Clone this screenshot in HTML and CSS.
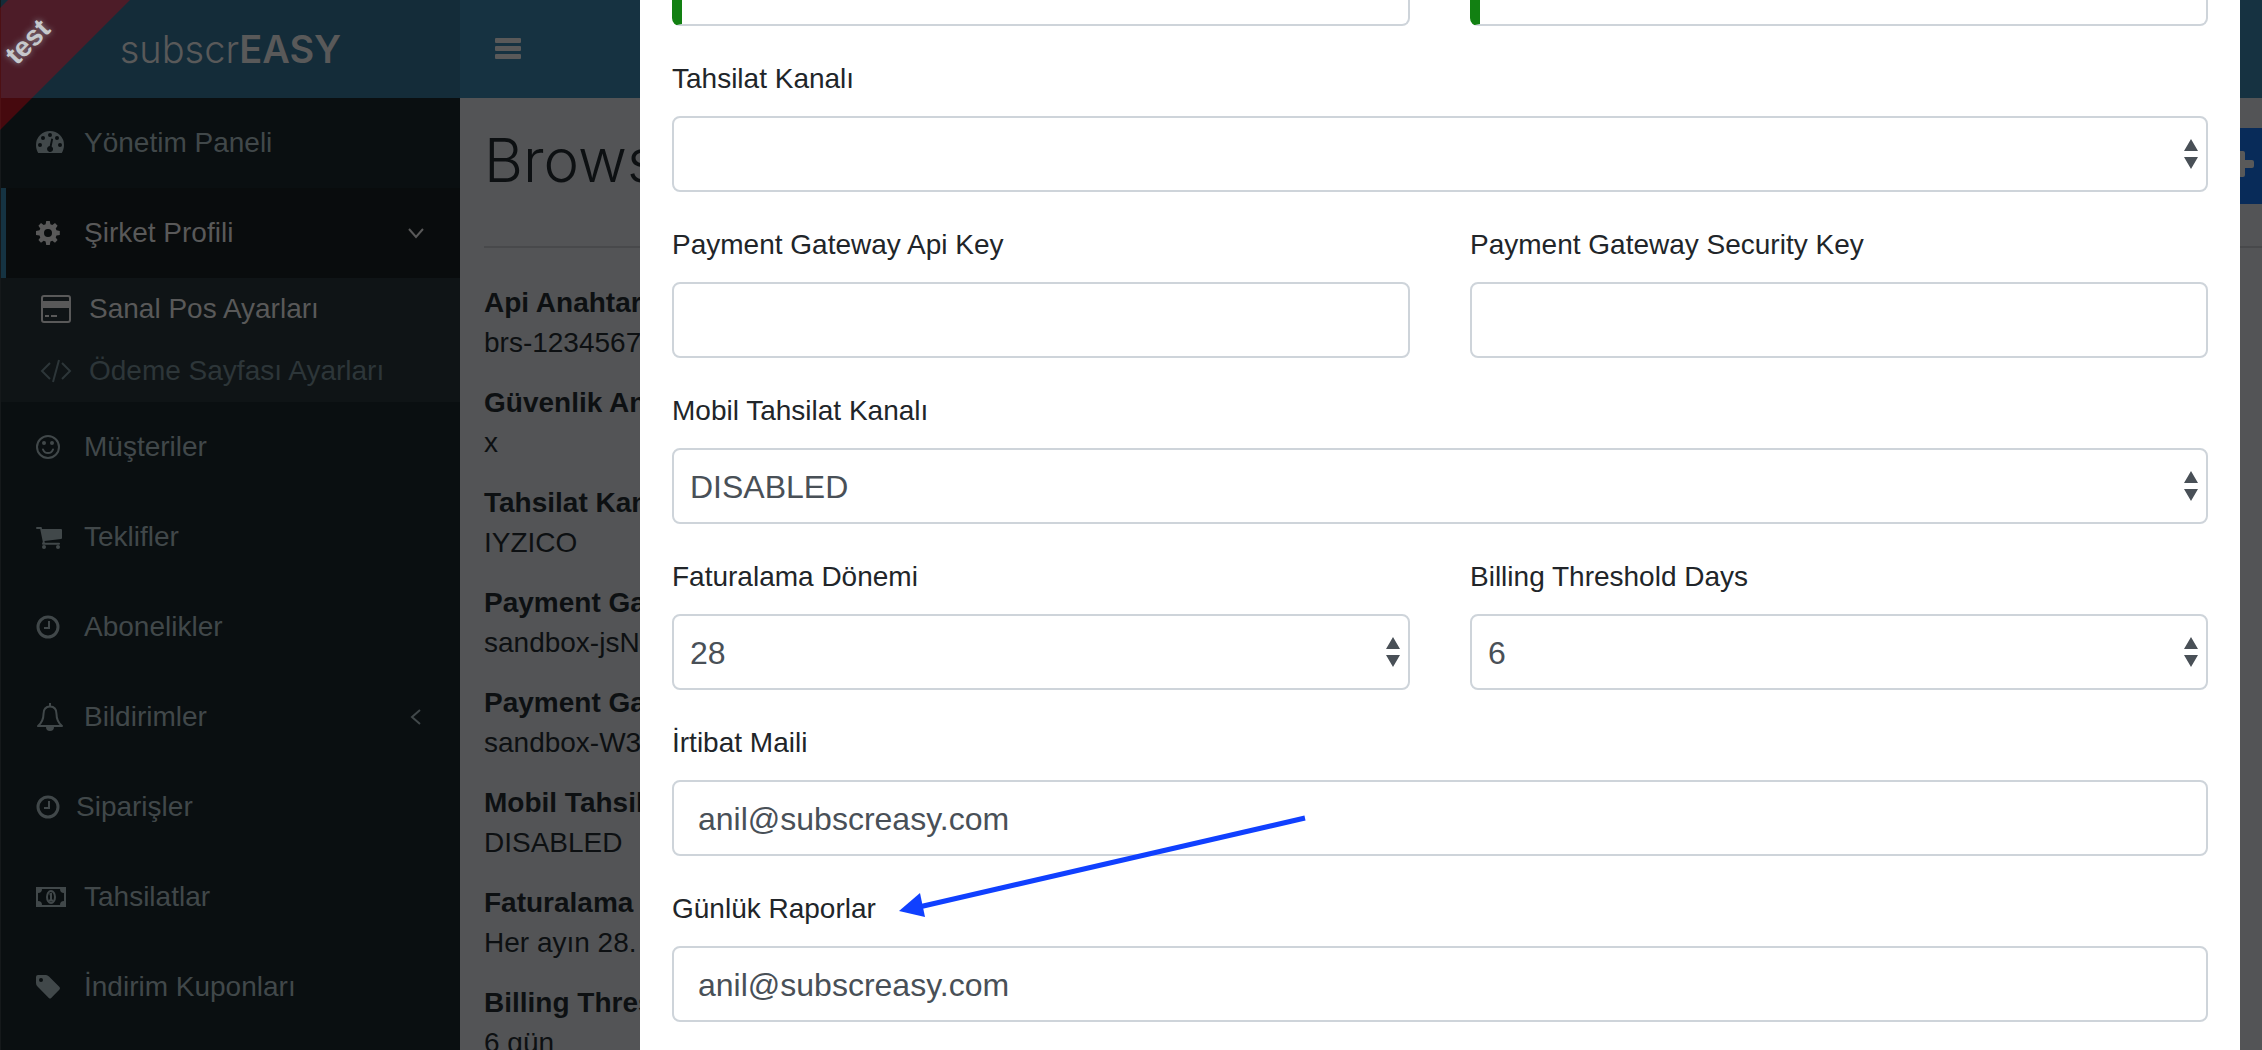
FILE: index.html
```
<!DOCTYPE html>
<html lang="tr">
<head>
    <meta charset="UTF-8">
    <meta name="viewport" content="width=device-width, initial-scale=1.0">
    <title>subscrEASY</title>
    <link rel="stylesheet" href="styles.css">
</head>
<body>
<div class="wrapper">
    <aside class="sidebar">
        <a class="logo" href="#"><span>subscr<b>EASY</b></span></a>
        <ul class="menu">
            <li>
                <a class="menu-link" href="#">
                    <svg class="icon" viewBox="0 0 28 28"><path fill="currentColor" fill-rule="evenodd" d="M0 16a14 14 0 0 1 28 0c0 3-.8 5.600-2.200 8H2.200C.8 21.600 0 19 0 16zM4 14a2 2 0 1 0 0 4a2 2 0 0 0 0-4zM7 7a2 2 0 1 0 0 4a2 2 0 0 0 0-4zM14 4a2 2 0 1 0 0 4a2 2 0 0 0 0-4zM21 7a2 2 0 1 0 0 4a2 2 0 0 0 0-4zM24 14a2 2 0 1 0 0 4a2 2 0 0 0 0-4zM15.300 9.500L13.700 17a3 3 0 1 0 1.900.4l1.500-7.500z"/></svg>
                    Yönetim Paneli
                </a>
            </li>
            <li class="active">
                <a class="menu-link" href="#">
                    <svg class="icon" viewBox="0 0 28 28"><path fill="currentColor" fill-rule="evenodd" d="M10.200 2h3.600l.6 3.200 1.900.8 2.700-1.900 2.600 2.600-1.900 2.700.8 1.900 3.300.6v4l-3.300.6-.8 1.900 1.900 2.700-2.600 2.600-2.700-1.900-1.900.8-.6 3.300h-3.600l-.6-3.300-1.900-.8L5 23.700l-2.600-2.600 1.900-2.700-.8-1.900L0 15.900v-4l3.500-.6.8-1.900-1.900-2.700L5 4.100 7.700 6l1.900-.8zM12 10a4 4 0 1 0 0 8a4 4 0 0 0 0-8z"/></svg>
                    Şirket Profili
                    <svg class="arrow" viewBox="0 0 16 16"><path d="M1 4l7 8 7-8"/></svg>
                </a>
                <ul class="submenu">
                    <li class="current">
                        <a href="#">
                            <svg class="icon" viewBox="0 0 30 28"><rect x="1" y="1" width="28" height="26" rx="2" fill="none" stroke="currentColor" stroke-width="2"/><path fill="currentColor" d="M1 6h28v7H1zM4 20h4v2H4zM10 20h6v2h-6z"/></svg>
                            Sanal Pos Ayarları
                        </a>
                    </li>
                    <li>
                        <a href="#">
                            <svg class="icon" viewBox="0 0 30 28"><path fill="none" stroke="currentColor" stroke-width="2" d="M9 6l-8 8 8 8M21 6l8 8-8 8M18 3l-6 22"/></svg>
                            Ödeme Sayfası Ayarları
                        </a>
                    </li>
                </ul>
            </li>
            <li>
                <a class="menu-link" href="#">
                    <svg class="icon" viewBox="0 0 28 28"><circle cx="12" cy="14" r="11" fill="none" stroke="currentColor" stroke-width="2"/><path fill="none" stroke="currentColor" stroke-width="2" stroke-linecap="round" d="M7 16.500a5.300 5.300 0 0 0 10 0"/><circle cx="8" cy="10" r="2" fill="currentColor"/><circle cx="16" cy="10" r="2" fill="currentColor"/></svg>
                    Müşteriler
                </a>
            </li>
            <li>
                <a class="menu-link" href="#">
                    <svg class="icon" viewBox="0 0 28 28"><path fill="currentColor" d="M1 4h4.500l.6 2H25q1 0 1 1v8q0 1-1 1L8.500 18l.3 1.800H23q1 0 1 1t-1 1H7q-1 0-1-1l.8-2L4.200 6H1q-1 0-1-1t1-1z"/><circle cx="8" cy="24" r="2" fill="currentColor"/><circle cx="22" cy="24" r="2" fill="currentColor"/></svg>
                    Teklifler
                </a>
            </li>
            <li>
                <a class="menu-link" href="#">
                    <svg class="icon" viewBox="0 0 28 28"><circle cx="12" cy="14" r="10" fill="none" stroke="currentColor" stroke-width="3"/><path fill="none" stroke="currentColor" stroke-width="2" d="M13 8v7H8"/></svg>
                    Abonelikler
                </a>
            </li>
            <li>
                <a class="menu-link" href="#">
                    <svg class="icon" viewBox="0 0 28 28"><path fill="none" stroke="currentColor" stroke-width="2" stroke-linejoin="round" d="M14 3.500C9 3.500 7.500 7 7.500 11c0 6-2.500 9.500-5.500 12h24c-3-2.500-5.500-6-5.500-12 0-4-1.500-7.500-6.500-7.500z"/><path fill="currentColor" d="M13 0h2v4h-2zM10 24h8a4 4 0 0 1-8 0z"/></svg>
                    Bildirimler
                    <svg class="arrow" viewBox="0 0 16 16"><path d="M12 1l-8 7 8 7"/></svg>
                </a>
            </li>
            <li>
                <a class="menu-link tight" href="#">
                    <svg class="icon" viewBox="0 0 28 28"><circle cx="12" cy="14" r="10" fill="none" stroke="currentColor" stroke-width="3"/><path fill="none" stroke="currentColor" stroke-width="2" d="M13 8v7H8"/></svg>
                    Siparişler
                </a>
            </li>
            <li>
                <a class="menu-link" href="#">
                    <svg class="icon" viewBox="0 0 28 28"><path fill="currentColor" fill-rule="evenodd" d="M0 4h30v20H0zM6 6a4 4 0 0 1-4 4v8a4 4 0 0 1 4 4h18a4 4 0 0 1 4-4v-8a4 4 0 0 1-4-4z"/><ellipse cx="15" cy="14" rx="4" ry="6" fill="none" stroke="currentColor" stroke-width="2"/><path fill="none" stroke="currentColor" stroke-width="2" d="M13.500 11.500L15 11v6M13 17.500h4"/></svg>
                    Tahsilatlar
                </a>
            </li>
            <li>
                <a class="menu-link" href="#">
                    <svg class="icon" viewBox="0 0 28 28"><path fill="currentColor" fill-rule="evenodd" d="M2 2h8q1.500 0 3 1.500L23.500 14q1 1.200 0 2.400L15.200 25q-1.200 1-2.400 0L1.500 13.500Q0 12 0 10V4q0-2 2-2zM5 5a2 2 0 1 0 0 4a2 2 0 0 0 0-4z"/></svg>
                    İndirim Kuponları
                </a>
            </li>
        </ul>
    </aside>
    <div class="page">
        <header class="navbar">
            <button class="toggle" type="button" aria-label="Menü"><i></i><i></i><i></i></button>
        </header>
        <main class="content">
            <div class="page-header">
                <h1>Browse</h1>
                <button class="btn-add" type="button" aria-label="Ekle">
                    <svg viewBox="0 0 26 26"><path fill="currentColor" d="M11 0h4q2 0 2 2v7h7q2 0 2 2v4q0 2-2 2h-7v7q0 2-2 2h-4q-2 0-2-2v-7H2q-2 0-2-2v-4q0-2 2-2h7V2q0-2 2-2z"/></svg>
                </button>
            </div>
            <dl class="details">
                <dt>Api Anahtarı</dt>
                <dd>brs-1234567</dd>
                <dt>Güvenlik An</dt>
                <dd>x</dd>
                <dt>Tahsilat Kan</dt>
                <dd>IYZICO</dd>
                <dt>Payment Ga</dt>
                <dd>sandbox-jsN</dd>
                <dt>Payment Ga</dt>
                <dd>sandbox-W3</dd>
                <dt>Mobil Tahsil</dt>
                <dd>DISABLED</dd>
                <dt>Faturalama</dt>
                <dd>Her ayın 28.</dd>
                <dt>Billing Thres</dt>
                <dd>6 gün</dd>
            </dl>
        </main>
    </div>
</div>

<div class="ribbon"><span>test</span></div>

<div class="modal">
    <form class="modal-body">
        <div class="form-group half">
            <input class="form-control valid" type="text" value="brs-1234567890" aria-label="Api Anahtarı">
        </div>
        <div class="form-group half">
            <input class="form-control valid" type="text" aria-label="Güvenlik Anahtarı">
        </div>
        <div class="form-group">
            <label for="channel">Tahsilat Kanalı</label>
            <select class="form-control" id="channel"><option></option><option>IYZICO</option></select>
        </div>
        <div class="form-group half">
            <label for="apiKey">Payment Gateway Api Key</label>
            <input class="form-control" type="text" id="apiKey">
        </div>
        <div class="form-group half">
            <label for="securityKey">Payment Gateway Security Key</label>
            <input class="form-control" type="text" id="securityKey">
        </div>
        <div class="form-group">
            <label for="mobileChannel">Mobil Tahsilat Kanalı</label>
            <select class="form-control" id="mobileChannel"><option>DISABLED</option></select>
        </div>
        <div class="form-group half">
            <label for="period">Faturalama Dönemi</label>
            <select class="form-control" id="period"><option>28</option></select>
        </div>
        <div class="form-group half">
            <label for="threshold">Billing Threshold Days</label>
            <select class="form-control" id="threshold"><option>6</option></select>
        </div>
        <div class="form-group">
            <label for="contactMail">İrtibat Maili</label>
            <input class="form-control" type="email" id="contactMail" value="anil@subscreasy.com">
        </div>
        <div class="form-group">
            <label for="dailyReports">Günlük Raporlar</label>
            <input class="form-control" type="email" id="dailyReports" value="anil@subscreasy.com">
            <svg class="pointer" viewBox="0 0 408 104"><path fill="none" stroke="#1040ff" stroke-width="5" d="M406 4L20 93"/><path fill="#1040ff" d="M0 97L21 79 26 103z"/></svg>
        </div>
    </form>
</div>
</body>
</html>
```

FILE: styles.css
```
:root {
    --bg-sidebar: #0a0f11;
    --bg-page: #535456;
    --color-muted: #41484a;
    --color-light: #595959;
    --color-text: #212529;
    --color-border: #ced4da;
}

* {
    box-sizing: border-box;
    margin: 0;
    padding: 0;
}

body {
    height: 100vh;
    overflow: hidden;
    font-family: "Helvetica Neue", Helvetica, "Liberation Sans", Arial, sans-serif;
    font-size: 28px;
    line-height: 40px;
    color: #0d1012;
}

ul {
    list-style: none;
}

a {
    color: inherit;
    text-decoration: none;
}

button {
    border: none;
    font: inherit;
}

.wrapper {
    display: flex;
    height: 100vh;
    overflow: hidden;
}

/* Sidebar */
.sidebar {
    flex: 0 0 460px;
    background: var(--bg-sidebar);
    border-left: 1px solid #15191b;
    color: var(--color-muted);
}

.logo {
    display: flex;
    align-items: center;
    justify-content: center;
    height: 98px;
    background: #142c39;
    color: var(--color-light);
    font-family: Inter, "Liberation Sans", sans-serif;
    font-size: 38px;
    font-weight: 300;
}

.logo b {
    font-weight: 600;
}

.menu-link {
    display: flex;
    align-items: center;
    gap: 20px;
    height: 90px;
    padding: 0 36px 0 30px;
    border-left: 5px solid transparent;
}

.menu-link.tight {
    gap: 12px;
}

.icon {
    width: 28px;
    height: 28px;
    flex-shrink: 0;
    overflow: visible;
}

.arrow {
    width: 16px;
    height: 16px;
    margin-left: auto;
    fill: none;
    stroke: currentColor;
    stroke-width: 2;
}

.active > .menu-link {
    background: #090c0d;
    border-left-color: #153342;
    color: var(--color-light);
}

.submenu {
    background: #0f1416;
    color: #2d3639;
}

.submenu a {
    display: flex;
    align-items: center;
    gap: 18px;
    height: 62px;
    padding-left: 40px;
}

.submenu .icon {
    width: 30px;
}

.submenu .current {
    color: var(--color-light);
}

/* Page behind the modal */
.page {
    flex: 1;
    min-width: 0;
    background: var(--bg-page);
}

.navbar {
    display: flex;
    align-items: center;
    height: 98px;
    padding: 0 0 2px 35px;
    background: #163241;
}

.toggle {
    display: grid;
    gap: 3px;
    background: none;
}

.toggle i {
    width: 26px;
    height: 5px;
    border-radius: 1px;
    background: var(--color-light);
}

.content {
    padding: 30px 0 0 24px;
}

.page-header {
    display: flex;
    justify-content: space-between;
    height: 120px;
    border-bottom: 2px solid #48494b;
}

.page-header h1 {
    font-family: Inter, "Liberation Sans", sans-serif;
    font-size: 60px;
    font-weight: 300;
    line-height: 64px;
}

.btn-add {
    width: 60px;
    height: 76px;
    padding: 0 0 4px 26px;
    background: #082b59;
    color: var(--color-light);
}

.btn-add svg {
    display: block;
    width: 26px;
    height: 26px;
}

.details {
    padding-top: 35px;
}

.details dt {
    font-weight: bold;
}

.details dd {
    margin-bottom: 20px;
}

.ribbon {
    position: absolute;
    top: 0;
    left: 0;
    width: 130px;
    height: 130px;
    display: flex;
    background: rgba(182, 0, 8, 0.35);
    clip-path: polygon(8px 0, 100% 0, 0 100%, 0 8px);
}

.ribbon span {
    margin: 22px 0 0 3px;
    height: 40px;
    color: #c6c8cc;
    font-weight: bold;
    text-shadow: 0 0 6px #8a8a92;
    transform: rotate(-45deg);
}

/* Modal */
.modal {
    position: absolute;
    top: 0;
    bottom: 0;
    left: 640px;
    right: 22px;
    overflow: hidden;
    background: #fff;
    color: var(--color-text);
}

.modal-body {
    display: grid;
    grid-template-columns: 1fr 1fr;
    column-gap: 60px;
    row-gap: 32px;
    margin-top: -50px;
    padding: 0 32px 32px;
}

.form-group {
    position: relative;
    grid-column: span 2;
}

.form-group.half {
    grid-column: span 1;
}

.form-group label {
    display: block;
    margin-bottom: 16px;
    line-height: 42px;
}

.form-control {
    display: block;
    width: 100%;
    height: 76px;
    padding: 2px 24px 0;
    border: 2px solid var(--color-border);
    border-radius: 8px;
    background: #fff;
    color: #495057;
    font-family: inherit;
    font-size: 32px;
}

.form-control.valid {
    border-left: 10px solid #128012;
}

select.form-control {
    appearance: none;
    padding: 2px 16px 0;
    background: #fff url("data:image/svg+xml,%3Csvg xmlns='http://www.w3.org/2000/svg' viewBox='0 0 14 30'%3E%3Cpath fill='%23495057' d='M7 0l7 12H0zM7 30L0 18h14z'/%3E%3C/svg%3E") no-repeat right 8px center / 14px 30px;
}

.pointer {
    position: absolute;
    top: -74px;
    left: 227px;
    width: 408px;
    height: 104px;
}
```
